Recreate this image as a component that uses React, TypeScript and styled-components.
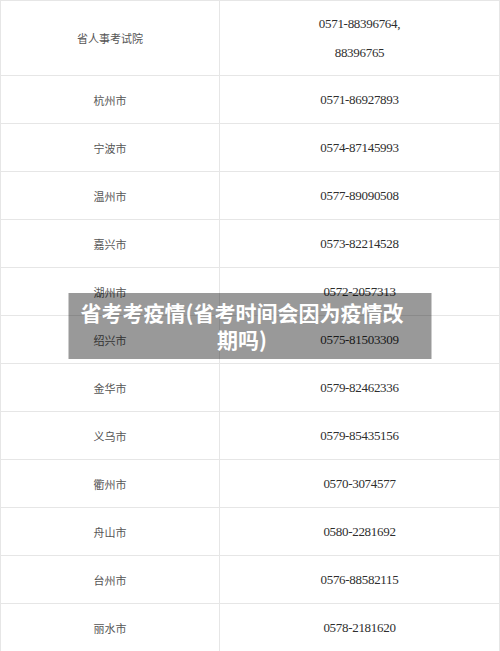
import React from 'react';
import styled, { createGlobalStyle } from 'styled-components';

const contacts: { name: string; phones: string[] }[] = [
  { name: '省人事考试院', phones: ['0571-88396764,', '88396765'] },
  { name: '杭州市', phones: ['0571-86927893'] },
  { name: '宁波市', phones: ['0574-87145993'] },
  { name: '温州市', phones: ['0577-89090508'] },
  { name: '嘉兴市', phones: ['0573-82214528'] },
  { name: '湖州市', phones: ['0572-2057313'] },
  { name: '绍兴市', phones: ['0575-81503309'] },
  { name: '金华市', phones: ['0579-82462336'] },
  { name: '义乌市', phones: ['0579-85435156'] },
  { name: '衢州市', phones: ['0570-3074577'] },
  { name: '舟山市', phones: ['0580-2281692'] },
  { name: '台州市', phones: ['0576-88582115'] },
  { name: '丽水市', phones: ['0578-2181620'] },
];

const GlobalStyle = createGlobalStyle`
  html, body {
    margin: 0;
    padding: 0;
    background: #fff;
  }
`;

function App() {
  return (
    <>
      <GlobalStyle />
      <Page>
        <Table>
          <colgroup>
            <col style={{ width: 219 }} />
            <col />
          </colgroup>
          <tbody>
            {contacts.map((item, index) => (
              <Row key={item.name} tall={index === 0}>
                <NameCell>{item.name}</NameCell>
                <PhoneCell>
                  {item.phones.map(p => (
                    <PhoneLine key={p}>{p}</PhoneLine>
                  ))}
                </PhoneCell>
              </Row>
            ))}
          </tbody>
        </Table>
        <Banner>省考考疫情(省考时间会因为疫情改期吗)</Banner>
      </Page>
    </>
  );
}

const Page = styled.div`
  position: relative;
  width: 500px;
  height: 651px;
  overflow: hidden;
  background: #fff;
`;

const Table = styled.table`
  width: 500px;
  border-collapse: collapse;
  table-layout: fixed;
`;

const Row = styled.tr<{ tall: boolean }>`
  height: ${({ tall }) => (tall ? '75px' : '48px')};
`;

const Cell = styled.td`
  border: 1px solid #e6e6e6;
  text-align: center;
  vertical-align: middle;
  padding: 0;
`;

const NameCell = styled(Cell)`
  font-family: 'Noto Sans CJK SC', sans-serif;
  font-size: 11px;
  color: #555;
`;

const PhoneCell = styled(Cell)`
  font-family: 'Liberation Serif', serif;
  font-size: 13px;
  letter-spacing: -0.3px;
  color: #2e2e2e;
`;

const PhoneLine = styled.div`
  line-height: 29px;
`;

const Banner = styled.div`
  position: absolute;
  top: 50%;
  left: 50%;
  transform: translate(-50%, -50%);
  width: 363px;
  box-sizing: border-box;
  padding: 6px 20px 6px 4px;
  background: rgba(0, 0, 0, 0.4);
  color: #fff;
  font-family: 'Noto Sans CJK SC', sans-serif;
  font-weight: 700;
  font-size: 21px;
  line-height: 27px;
  text-align: center;
`;

export default App;
